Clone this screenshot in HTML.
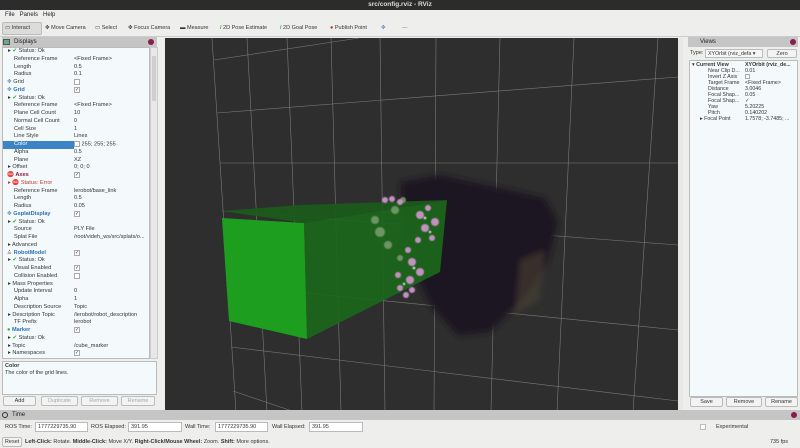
<!DOCTYPE html>
<html><head><meta charset="utf-8"><style>
*{margin:0;padding:0;box-sizing:border-box}
body{width:800px;height:448px;overflow:hidden;background:#eeeeec;font-family:"Liberation Sans","DejaVu Sans",sans-serif;font-size:6px;color:#333;position:relative}
.abs{position:absolute}
.title{left:0;top:0;width:800px;height:10px;background:#2c2c2c;color:#ddd;font-size:6.5px;text-align:center;line-height:10px;font-weight:bold}
.menu{top:10px;left:0;width:800px;height:10px;line-height:10px;font-size:6px;color:#222}
.menu span{margin-left:5px}
.tb{top:20px;left:0;width:800px;height:17px;border-bottom:1px solid #ccc}
.tb span{position:absolute;top:4px;font-size:5.5px;color:#333;line-height:9px}
.hdr{height:10px;background:#c5c5c5;line-height:10px;font-size:6px;color:#222;padding-left:12px}
.close{position:absolute;width:6px;height:6px;border-radius:3px;background:#8a1c4a;top:2px}
.tree{left:2px;top:47px;width:148px;height:312px;background:#f4fafc;border:1px solid #bbb;overflow:hidden}
.r{position:absolute;left:0;width:148px;height:7.75px;line-height:7.75px;font-size:5.6px;white-space:nowrap}
.r .k{position:absolute}
.r .v{position:absolute;left:71px}
.sel{background:#3d84c6;color:#fff}
.cb{display:inline-block;width:6px;height:6px;border:1px solid #aaa;background:#fff;vertical-align:middle;font-size:5px;line-height:5px;text-align:center}
.b{color:#2c6fb2;font-weight:bold}
.btn{position:absolute;height:10px;border:1px solid #bbb;background:#f3f3f3;text-align:center;line-height:9px;font-size:5.5px;border-radius:2px}
.fld{position:absolute;top:422px;height:10px;border:1px solid #bbb;background:#fff;font-size:5.5px;line-height:9px;padding-left:2px}
.lab{position:absolute;top:422px;line-height:10px;font-size:5.5px}
.rv{position:absolute;font-size:5.3px;line-height:6px;white-space:nowrap}
</style></head><body>
<div class="abs title">src/config.rviz - RViz</div>
<div class="abs menu"><span>File</span><span>Panels</span><span>Help</span></div>
<div class="abs tb">
<div class="abs" style="left:2px;top:2px;width:40px;height:13px;background:#dcdcdc;border:1px solid #bbb;border-radius:2px"></div>
<span style="left:5px">▭ Interact</span><span style="left:45px">✥ Move Camera</span><span style="left:95px">▭ Select</span><span style="left:128px">✥ Focus Camera</span><span style="left:180px">▬ Measure</span><span style="left:220px;"><b style="color:#3a3">/</b> 2D Pose Estimate</span><span style="left:280px"><b style="color:#3a3">/</b> 2D Goal Pose</span><span style="left:330px"><b style="color:#a32">●</b> Publish Point</span><span style="left:381px;color:#48c">✥</span><span style="left:402px;color:#48c">—</span>
</div>
<div class="abs hdr" style="left:2px;top:37px;width:155px">Displays</div>
<div class="abs" style="left:3px;top:39px;width:7px;height:6px;background:#6a8;border:1px solid #555"></div>
<div class="close" style="left:148px;top:39px"></div>
<div class="abs tree">
<div class="r" style="top:0"><span class="k" style="left:5px">▸ <span style="color:#3a3">✔</span> Status: Ok</span></div>
<div class="r" style="top:7.75px"><span class="k" style="left:11px">Reference Frame</span><span class="v">&lt;Fixed Frame&gt;</span></div>
<div class="r" style="top:15.5px"><span class="k" style="left:11px">Length</span><span class="v">0.5</span></div>
<div class="r" style="top:23.25px"><span class="k" style="left:11px">Radius</span><span class="v">0.1</span></div>
<div class="r" style="top:31px"><span class="k" style="left:4px"><span style="color:#58a">✥</span> Grid</span><span class="v"><span class="cb"></span></span></div>
<div class="r" style="top:38.75px"><span class="k b" style="left:4px"><span style="color:#58a">✥</span> Grid</span><span class="v"><span class="cb">✓</span></span></div>
<div class="r" style="top:46.5px"><span class="k" style="left:5px">▸ <span style="color:#3a3">✔</span> Status: Ok</span></div>
<div class="r" style="top:54.25px"><span class="k" style="left:11px">Reference Frame</span><span class="v">&lt;Fixed Frame&gt;</span></div>
<div class="r" style="top:62px"><span class="k" style="left:11px">Plane Cell Count</span><span class="v">10</span></div>
<div class="r" style="top:69.75px"><span class="k" style="left:11px">Normal Cell Count</span><span class="v">0</span></div>
<div class="r" style="top:77.5px"><span class="k" style="left:11px">Cell Size</span><span class="v">1</span></div>
<div class="r" style="top:85.25px"><span class="k" style="left:11px">Line Style</span><span class="v">Lines</span></div>
<div class="r" style="top:93px"><span class="k sel" style="left:0;width:71px;height:7.75px;padding-left:11px">Color</span><span class="v"><span class="cb"></span> 255; 255; 255</span></div>
<div class="r" style="top:100.75px"><span class="k" style="left:11px">Alpha</span><span class="v">0.5</span></div>
<div class="r" style="top:108.5px"><span class="k" style="left:11px">Plane</span><span class="v">XZ</span></div>
<div class="r" style="top:116.25px"><span class="k" style="left:5px">▸ Offset</span><span class="v">0; 0; 0</span></div>
<div class="r" style="top:124px"><span class="k b" style="left:4px;color:#8b1b3f"><span>⛔</span> Axes</span><span class="v"><span class="cb">✓</span></span></div>
<div class="r" style="top:131.75px"><span class="k" style="left:5px;color:#c0392b">▸ <span style="color:#8b1b3f">⛔</span> Status: Error</span></div>
<div class="r" style="top:139.5px"><span class="k" style="left:11px">Reference Frame</span><span class="v">lerobot/base_link</span></div>
<div class="r" style="top:147.25px"><span class="k" style="left:11px">Length</span><span class="v">0.5</span></div>
<div class="r" style="top:155px"><span class="k" style="left:11px">Radius</span><span class="v">0.05</span></div>
<div class="r" style="top:162.75px"><span class="k b" style="left:4px"><span style="color:#58a">✥</span> GsplatDisplay</span><span class="v"><span class="cb">✓</span></span></div>
<div class="r" style="top:170.5px"><span class="k" style="left:5px">▸ <span style="color:#3a3">✔</span> Status: Ok</span></div>
<div class="r" style="top:178.25px"><span class="k" style="left:11px">Source</span><span class="v">PLY File</span></div>
<div class="r" style="top:186px"><span class="k" style="left:11px">Splat File</span><span class="v">/root/videh_ws/src/splats/o...</span></div>
<div class="r" style="top:193.75px"><span class="k" style="left:5px">▸ Advanced</span></div>
<div class="r" style="top:201.5px"><span class="k b" style="left:4px"><span style="color:#555">♙</span> RobotModel</span><span class="v"><span class="cb">✓</span></span></div>
<div class="r" style="top:209.25px"><span class="k" style="left:5px">▸ <span style="color:#3a3">✔</span> Status: Ok</span></div>
<div class="r" style="top:217px"><span class="k" style="left:11px">Visual Enabled</span><span class="v"><span class="cb">✓</span></span></div>
<div class="r" style="top:224.75px"><span class="k" style="left:11px">Collision Enabled</span><span class="v"><span class="cb"></span></span></div>
<div class="r" style="top:232.5px"><span class="k" style="left:5px">▸ Mass Properties</span></div>
<div class="r" style="top:240.25px"><span class="k" style="left:11px">Update Interval</span><span class="v">0</span></div>
<div class="r" style="top:248px"><span class="k" style="left:11px">Alpha</span><span class="v">1</span></div>
<div class="r" style="top:255.75px"><span class="k" style="left:11px">Description Source</span><span class="v">Topic</span></div>
<div class="r" style="top:263.5px"><span class="k" style="left:5px">▸ Description Topic</span><span class="v">/lerobot/robot_description</span></div>
<div class="r" style="top:271.25px"><span class="k" style="left:11px">TF Prefix</span><span class="v">lerobot</span></div>
<div class="r" style="top:279px"><span class="k b" style="left:4px"><span style="color:#2b2">●</span> Marker</span><span class="v"><span class="cb">✓</span></span></div>
<div class="r" style="top:286.75px"><span class="k" style="left:5px">▸ <span style="color:#3a3">✔</span> Status: Ok</span></div>
<div class="r" style="top:294.5px"><span class="k" style="left:5px">▸ Topic</span><span class="v">/cube_marker</span></div>
<div class="r" style="top:302.25px"><span class="k" style="left:5px">▸ Namespaces</span><span class="v"><span class="cb">✓</span></span></div>
</div>
<div class="abs" style="left:150px;top:47px;width:8px;height:312px;background:#e8e8e8;border:1px solid #ccc"><div style="margin:8px 1px;height:45px;background:#cfcfcf"></div></div>
<div class="abs" style="left:2px;top:361px;width:155px;height:34px;background:#f4fafc;border:1px solid #bbb;font-size:5.5px;padding:1px 2px;line-height:6.5px"><b>Color</b><br>The color of the grid lines.</div>
<div class="btn" style="left:3px;top:396px;width:33px">Add</div>
<div class="btn" style="left:41px;top:396px;width:37px;color:#aaa">Duplicate</div>
<div class="btn" style="left:81px;top:396px;width:37px;color:#aaa">Remove</div>
<div class="btn" style="left:121px;top:396px;width:34px;color:#aaa">Rename</div>
<svg class="abs" style="left:0;top:0" width="800" height="448">
<defs><filter id="bl" x="-20%" y="-20%" width="140%" height="140%"><feGaussianBlur stdDeviation="3"/></filter><filter id="bl2"><feGaussianBlur stdDeviation="0.6"/></filter></defs>
<rect x="165" y="38" width="513" height="374" fill="#2e2e2e"/>
<g stroke="#7a7a7a" stroke-width="0.6" fill="none">
<line x1="212" y1="38" x2="236" y2="412"/><line x1="247" y1="38" x2="267" y2="412"/><line x1="287" y1="38" x2="302" y2="412"/><line x1="331" y1="38" x2="341" y2="412"/><line x1="380" y1="38" x2="385" y2="412"/><line x1="436" y1="38" x2="434" y2="412"/><line x1="500" y1="38" x2="491" y2="412"/><line x1="574" y1="38" x2="557" y2="412"/><line x1="658" y1="38" x2="633" y2="412"/>
<line x1="214" y1="60" x2="359" y2="38"/><line x1="217" y1="113" x2="678" y2="77"/><line x1="220" y1="163" x2="678" y2="163"/><line x1="222" y1="211" x2="678" y2="245"/><line x1="226" y1="285" x2="678" y2="330"/><line x1="231" y1="347" x2="678" y2="401"/><line x1="233" y1="391" x2="295" y2="412"/>
</g>
<g filter="url(#bl)">
<polygon points="400,182 440,175 500,188 545,198 558,222 548,262 522,300 490,332 458,336 430,305 410,262 403,222" fill="#1c1822"/>
<polygon points="520,260 545,250 540,300 515,315" fill="#4a4030" opacity="0.6"/>
</g>
<polygon points="222,211 300,205 447,200 304,223" fill="#1b5a1b" opacity="0.95"/>
<polygon points="304,223 447,200 440,272 307,339" fill="#1b671b" opacity="0.92"/>
<polygon points="222,218 304,223 307,339 229,321" fill="#1e9e1e"/>
<g filter="url(#bl2)">
<g fill="#7c9e70" opacity="0.85"><circle cx="375" cy="220" r="4"/><circle cx="380" cy="232" r="5"/><circle cx="388" cy="245" r="4"/><circle cx="395" cy="210" r="4"/><circle cx="400" cy="258" r="3"/><circle cx="403" cy="200" r="3"/></g>
<g fill="#c490bf"><circle cx="385" cy="200" r="3"/><circle cx="392" cy="199" r="3"/><circle cx="400" cy="202" r="3"/><circle cx="420" cy="215" r="4"/><circle cx="428" cy="208" r="3"/><circle cx="435" cy="222" r="4"/><circle cx="425" cy="228" r="4"/><circle cx="432" cy="238" r="3"/><circle cx="418" cy="240" r="3"/><circle cx="408" cy="250" r="3"/><circle cx="412" cy="262" r="4"/><circle cx="420" cy="272" r="4"/><circle cx="410" cy="280" r="4"/><circle cx="400" cy="288" r="3"/><circle cx="406" cy="295" r="3"/><circle cx="412" cy="290" r="3"/><circle cx="398" cy="275" r="3"/></g>
<g fill="#eadcea"><circle cx="425" cy="218" r="1.3"/><circle cx="414" cy="268" r="1.3"/><circle cx="404" cy="284" r="1.2"/><circle cx="430" cy="232" r="1.2"/></g>
</g>
<rect x="678" y="38" width="5" height="374" fill="#e8e8e6"/>
</svg>
<div class="abs hdr" style="left:688px;top:37px;width:110px">Views</div>
<div class="close" style="left:790px;top:39px"></div>
<div class="abs" style="left:690px;top:49px;font-size:5.5px;line-height:9px">Type:</div>
<div class="abs" style="left:705px;top:49px;width:58px;height:9px;border:1px solid #bbb;background:#f6f6f6;font-size:5.3px;line-height:8px;padding-left:2px">XYOrbit (rviz_defa ▾</div>
<div class="btn" style="left:767px;top:49px;width:30px;height:9px;line-height:8px">Zero</div>
<div class="abs" style="left:689px;top:60px;width:109px;height:337px;background:#f4fafc;border:1px solid #bbb"></div>
<div class="rv" style="left:692px;top:62px;font-weight:bold">▾ Current View</div><div class="rv" style="left:745px;top:62px;font-weight:bold">XYOrbit (rviz_de...</div>
<div class="rv" style="left:708px;top:68px">Near Clip D...</div><div class="rv" style="left:745px;top:68px">0.01</div>
<div class="rv" style="left:708px;top:74px">Invert Z Axis</div><div class="rv" style="left:745px;top:74px"><span class="cb" style="width:5px;height:5px"></span></div>
<div class="rv" style="left:708px;top:80px">Target Frame</div><div class="rv" style="left:745px;top:80px">&lt;Fixed Frame&gt;</div>
<div class="rv" style="left:708px;top:86px">Distance</div><div class="rv" style="left:745px;top:86px">3.0046</div>
<div class="rv" style="left:708px;top:92px">Focal Shap...</div><div class="rv" style="left:745px;top:92px">0.05</div>
<div class="rv" style="left:708px;top:98px">Focal Shap...</div><div class="rv" style="left:745px;top:98px">✓</div>
<div class="rv" style="left:708px;top:104px">Yaw</div><div class="rv" style="left:745px;top:104px">5.20225</div>
<div class="rv" style="left:708px;top:110px">Pitch</div><div class="rv" style="left:745px;top:110px">0.140202</div>
<div class="rv" style="left:700px;top:116px">▸ Focal Point</div><div class="rv" style="left:745px;top:116px">1.7578; -3.7485; ...</div>
<div class="btn" style="left:690px;top:397px;width:33px">Save</div>
<div class="btn" style="left:726px;top:397px;width:36px">Remove</div>
<div class="btn" style="left:765px;top:397px;width:33px">Rename</div>
<div class="abs hdr" style="left:0;top:410px;width:800px">Time</div>
<div class="abs" style="left:2px;top:412px;width:6px;height:6px;border:1px solid #333;border-radius:3px"></div>
<div class="close" style="left:791px;top:412px"></div>
<div class="lab" style="left:5px">ROS Time:</div><div class="fld" style="left:35px;width:53px">1777229735.90</div>
<div class="lab" style="left:91px">ROS Elapsed:</div><div class="fld" style="left:128px;width:54px">391.95</div>
<div class="lab" style="left:185px">Wall Time:</div><div class="fld" style="left:215px;width:53px">1777229735.90</div>
<div class="lab" style="left:272px">Wall Elapsed:</div><div class="fld" style="left:309px;width:54px">391.95</div>
<div class="abs" style="left:700px;top:424px;width:6px;height:6px;border:1px solid #bbb;background:#fff"></div>
<div class="lab" style="left:716px">Experimental</div>
<div class="btn" style="left:2px;top:437px;width:20px">Reset</div>
<div class="abs" style="left:25px;top:437px;font-size:5.5px;line-height:10px"><b>Left-Click:</b> Rotate. <b>Middle-Click:</b> Move X/Y. <b>Right-Click/Mouse Wheel:</b> Zoom. <b>Shift:</b> More options.</div>
<div class="abs" style="left:770px;top:437px;font-size:5.5px;line-height:10px">735 fps</div>
</body></html>
